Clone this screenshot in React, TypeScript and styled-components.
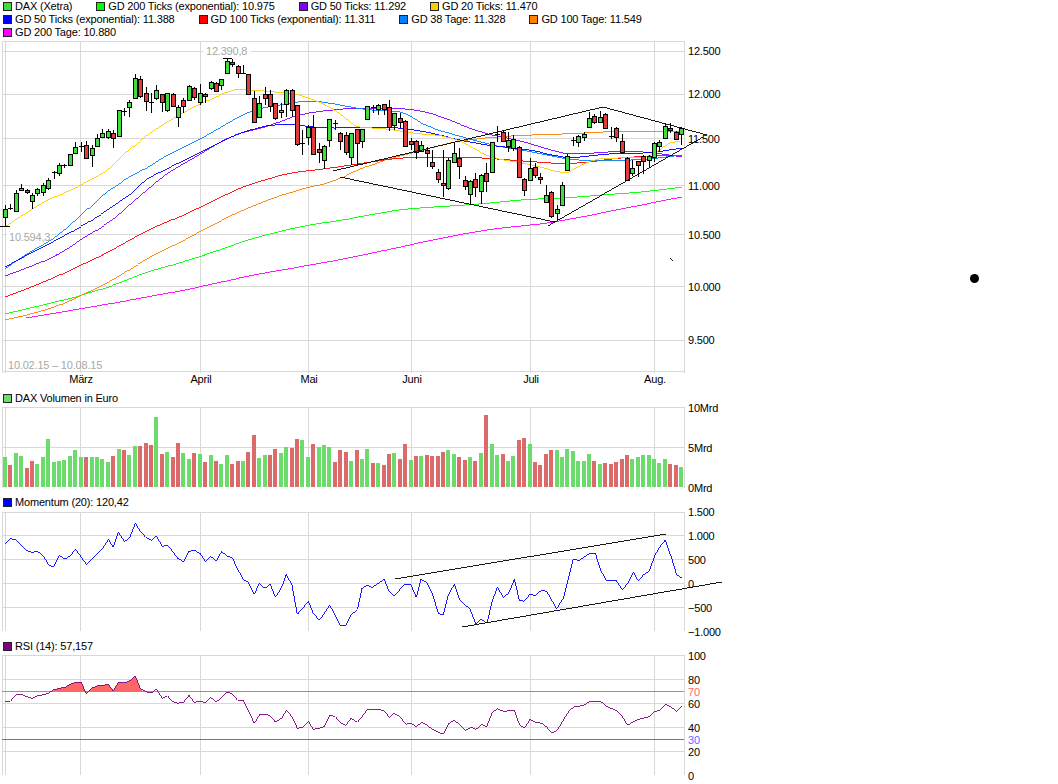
import React, { FC, ReactElement } from 'react'
import styled, { createGlobalStyle } from 'styled-components'

const GlobalStyle = createGlobalStyle`
  html, body {
    margin: 0;
    padding: 0;
    background: #fff;
    font-family: "Liberation Sans", Arial, sans-serif;
  }
`

const Page = styled.div`
  position: relative;
  width: 1058px;
  height: 784px;
  overflow: hidden;
  color: #000;
  font-size: 11px;
  letter-spacing: -0.18px;
`

const Legend = styled.div`
  display: flex;
  flex-wrap: wrap;
  align-content: flex-start;
  column-gap: 24px;
  width: 690px;
  height: 41px;
  padding-left: 3px;
  box-sizing: border-box;
`

const LegendItem = styled.div`
  display: flex;
  align-items: center;
  gap: 3px;
  height: 13px;
  line-height: 13px;
  white-space: nowrap;
`

const Swatch = styled.span<{ $color: string }>`
  width: 7px;
  height: 7px;
  border: 1px solid #222;
  background: ${props => props.$color};
`

const PanelTitle = styled.div`
  display: flex;
  align-items: flex-start;
  height: 16px;
  padding: 1px 0 0 3px;
  box-sizing: border-box;
`

const ChartSvg = styled.svg`
  display: block;
  width: 730px;
  overflow: visible;
`

const Label = styled.text<{ $color?: string }>`
  font-family: "Liberation Sans", Arial, sans-serif;
  font-size: 11px;
  letter-spacing: -0.2px;
  fill: ${props => props.$color || '#000'};
`

const Marker = styled.div`
  position: absolute;
  left: 970px;
  top: 274px;
  width: 9px;
  height: 9px;
  border-radius: 50%;
  background: #000;
`

const GRID = '#d8d8d8'
const GRAY = '#a8a8a8'
const LEFT = 2
const RIGHT = 684
const THIN = 0.9
const MONTHS: [string, number][] = [
    ['März', 80],
    ['April', 200],
    ['Mai', 308],
    ['Juni', 411],
    ['Juli', 530],
    ['Aug.', 654],
]

const slotX = (i: number): number => Math.round(5 + i * 5.408)

// top, bottom, high, low of each candle in page pixels
type Candle = [number, number, number, number, 'g' | 'r']

const CANDLES: Candle[] = [
    [209, 217, 205, 226, 'g'], [208, 208, 204, 210, 'r'], [193, 211, 190, 211, 'g'], [188, 190, 184, 190, 'g'],
    [190, 192, 189, 194, 'r'], [195, 201, 193, 209, 'g'], [189, 193, 188, 196, 'g'], [185, 192, 183, 196, 'g'],
    [180, 188, 178, 190, 'g'], [172, 172, 171, 179, 'r'], [165, 173, 163, 176, 'g'], [165, 165, 164, 168, 'g'],
    [154, 165, 154, 166, 'g'], [147, 153, 142, 154, 'g'], [146, 146, 142, 152, 'g'], [145, 158, 141, 158, 'r'],
    [148, 155, 145, 167, 'g'], [138, 146, 134, 146, 'g'], [133, 137, 129, 138, 'g'], [131, 137, 129, 139, 'g'],
    [133, 138, 130, 148, 'r'], [110, 136, 110, 136, 'g'], [111, 111, 108, 116, 'g'], [102, 107, 100, 117, 'g'],
    [78, 98, 74, 98, 'g'], [79, 96, 76, 98, 'r'], [93, 101, 87, 111, 'r'], [102, 102, 93, 113, 'g'],
    [90, 98, 85, 100, 'g'], [94, 102, 94, 112, 'r'], [93, 110, 93, 112, 'g'], [94, 106, 93, 107, 'r'],
    [107, 117, 105, 127, 'g'], [100, 106, 98, 113, 'r'], [86, 100, 85, 101, 'g'], [88, 97, 87, 100, 'r'],
    [93, 102, 84, 105, 'g'], [94, 96, 93, 103, 'r'], [82, 88, 81, 90, 'g'], [83, 91, 82, 92, 'r'],
    [79, 85, 79, 90, 'g'], [61, 73, 59, 73, 'g'], [62, 64, 59, 67, 'r'], [66, 73, 65, 78, 'r'],
    [73, 73, 65, 74, 'r'], [74, 94, 74, 94, 'r'], [98, 122, 91, 123, 'r'], [103, 117, 96, 118, 'g'],
    [94, 98, 87, 105, 'r'], [94, 106, 90, 112, 'r'], [103, 118, 103, 120, 'r'], [110, 112, 103, 118, 'g'],
    [90, 104, 89, 117, 'g'], [90, 110, 89, 117, 'r'], [105, 144, 105, 146, 'r'], [143, 143, 130, 155, 'g'],
    [127, 137, 125, 145, 'g'], [127, 154, 115, 154, 'r'], [149, 152, 143, 163, 'r'], [146, 160, 145, 169, 'g'],
    [119, 140, 119, 147, 'g'], [123, 123, 120, 130, 'g'], [133, 141, 132, 150, 'r'], [135, 152, 132, 155, 'r'],
    [133, 157, 133, 165, 'g'], [129, 143, 129, 165, 'r'], [129, 141, 129, 148, 'g'], [106, 119, 106, 119, 'g'],
    [107, 107, 105, 113, 'g'], [105, 109, 104, 115, 'g'], [104, 109, 104, 115, 'r'], [107, 127, 100, 131, 'r'],
    [113, 125, 113, 130, 'g'], [118, 122, 113, 128, 'r'], [121, 146, 120, 147, 'r'], [141, 144, 138, 150, 'r'],
    [141, 152, 140, 159, 'r'], [145, 151, 141, 152, 'g'], [150, 153, 147, 167, 'r'], [162, 166, 150, 169, 'r'],
    [172, 179, 169, 183, 'r'], [183, 185, 150, 197, 'r'], [160, 188, 158, 190, 'g'], [153, 162, 143, 163, 'g'],
    [158, 166, 148, 179, 'r'], [180, 186, 176, 190, 'r'], [181, 194, 180, 205, 'g'], [179, 187, 173, 197, 'r'],
    [175, 191, 174, 204, 'g'], [173, 181, 163, 192, 'r'], [142, 172, 142, 172, 'g'], [134, 134, 126, 142, 'g'],
    [132, 141, 130, 141, 'r'], [140, 146, 132, 152, 'g'], [139, 148, 135, 151, 'g'], [147, 177, 146, 178, 'r'],
    [179, 190, 178, 196, 'r'], [168, 180, 158, 180, 'g'], [167, 175, 163, 178, 'r'], [177, 179, 173, 184, 'r'],
    [195, 202, 185, 202, 'g'], [192, 216, 191, 218, 'r'], [209, 213, 205, 220, 'g'], [185, 205, 182, 206, 'g'],
    [156, 170, 154, 171, 'g'], [140, 140, 137, 146, 'g'], [136, 142, 135, 147, 'g'], [134, 137, 132, 141, 'g'],
    [118, 127, 112, 128, 'g'], [116, 122, 114, 124, 'r'], [117, 122, 111, 122, 'g'], [114, 128, 113, 129, 'r'],
    [136, 136, 127, 139, 'g'], [128, 137, 127, 142, 'r'], [141, 152, 134, 154, 'r'], [158, 180, 157, 181, 'r'],
    [168, 173, 160, 176, 'g'], [161, 165, 161, 177, 'r'], [156, 161, 155, 174, 'r'], [156, 160, 155, 168, 'g'],
    [143, 157, 142, 162, 'g'], [142, 146, 140, 152, 'g'], [126, 138, 123, 138, 'g'], [128, 130, 123, 133, 'r'],
    [132, 139, 131, 140, 'r'], [128, 134, 127, 145, 'g'],
]

// bar tops on a 3x crop, baseline sits at 351 there
const VOLUME_TOPS = [
    261, 285, 249, 258, 294, 273, 282, 261, 207, 276, 273, 270, 258, 240, 261, 261, 261, 261, 267, 276, 258,
    237, 240, 255, 228, 228, 219, 225, 141, 252, 246, 261, 219, 249, 267, 249, 252, 276, 255, 273, 282, 255,
    282, 273, 273, 246, 195, 264, 255, 255, 237, 249, 231, 234, 207, 210, 261, 222, 231, 225, 231, 276, 240,
    246, 273, 240, 267, 237, 279, 279, 285, 252, 249, 267, 222, 270, 258, 258, 255, 258, 258, 246, 240, 252,
    261, 270, 261, 273, 249, 135, 222, 255, 252, 273, 258, 210, 204, 222, 276, 285, 252, 240, 240, 261, 237,
    243, 273, 273, 252, 273, 282, 279, 282, 276, 267, 255, 267, 261, 255, 255, 267, 279, 267, 282, 285, 291,
]

// bar numbers counted from 1
const VOLUME_RED = new Set([
    2, 5, 6, 16, 21, 23, 26, 27, 28, 30, 32, 33, 36, 38, 40, 43, 44, 46, 47, 50, 51, 54, 55, 58, 62, 63, 64, 66,
    69, 71, 72, 74, 75, 77, 79, 80, 81, 82, 85, 86, 88, 90, 93, 96, 97, 99, 100, 101, 102, 110, 112, 113, 114,
    115, 116, 124, 125,
])

type Point = [number, number]

const toPoints = (points: Point[]): string => points.map(([x, y]) => `${x},${y}`).join(' ')

// rounds the corners of a traced average through the midpoints
const toCurve = (points: Point[]): string => {
    let d = `M${points[0][0]} ${points[0][1]}`
    for (let i = 1; i < points.length - 1; i++) {
        const [x, y] = points[i]
        const [nx, ny] = points[i + 1]
        d += ` Q${x} ${y} ${(x + nx) / 2} ${(y + ny) / 2}`
    }
    const [lx, ly] = points[points.length - 1]
    return `${d} L${lx} ${ly}`
}

// traced from 3x crops, so put back on the page
const fromCrop = (points: Point[], originX: number, originY: number): Point[] =>
    points.map(([x, y]) => [originX + x / 3, originY + y / 3])

const AVERAGES: { color: string; points: Point[] }[] = [
    { // GD 200 Tage
        color: '#ff00ff',
        points: [[26, 318], [80, 309], [147, 297], [200, 287], [247, 276], [310, 265], [350, 258], [417, 243], [483, 230], [530, 225], [550, 223], [617, 210], [650, 203], [682, 197]],
    },
    { // GD 200 Ticks
        color: '#00ff00',
        points: [[5, 314], [43, 305], [80, 296], [123, 282], [143, 273], [200, 257], [237, 243], [273, 233], [307, 225], [350, 219], [393, 210], [433, 207], [483, 204], [527, 199], [567, 198], [600, 195], [643, 192], [682, 187]],
    },
    { // GD 100 Tage
        color: '#ff7f00',
        points: [[5, 320], [43, 312], [80, 296], [110, 282], [147, 258], [200, 232], [227, 217], [267, 200], [300, 189], [333, 182], [350, 173], [383, 160], [417, 152], [450, 142], [483, 138], [523, 135], [567, 134], [600, 132], [633, 131], [682, 132]],
    },
    { // GD 100 Ticks
        color: '#ff0000',
        points: [[5, 297], [43, 283], [80, 265], [113, 250], [147, 230], [200, 208], [240, 187], [287, 173], [317, 170], [350, 165], [383, 160], [410, 157], [467, 157], [497, 159], [523, 161], [550, 163], [570, 164], [597, 161], [627, 157], [682, 155]],
    },
    { // GD 50 Ticks
        color: '#8000ff',
        points: [[5, 276], [30, 267], [57, 255], [80, 240], [113, 220], [127, 207], [147, 190], [167, 173], [187, 162], [207, 150], [227, 138], [243, 132], [267, 127], [290, 117], [313, 112], [350, 108], [403, 108], [433, 113], [460, 125], [490, 135], [517, 140], [540, 147], [563, 154], [583, 154], [617, 151], [650, 152], [682, 157]],
    },
    { // GD 38 Tage
        color: '#0080ff',
        points: [[5, 269], [27, 253], [53, 240], [77, 219], [100, 197], [123, 180], [143, 170], [167, 155], [193, 143], [213, 132], [233, 120], [253, 110], [267, 107], [290, 103], [313, 100], [350, 107], [367, 110], [393, 111], [407, 113], [423, 125], [443, 132], [467, 138], [490, 145], [510, 148], [537, 153], [560, 158], [577, 160], [597, 161], [633, 160], [650, 159], [682, 155]],
    },
    { // GD 50 Ticks (exponential)
        color: '#0000ff',
        points: [[5, 267], [27, 255], [53, 242], [92, 220], [103, 213], [127, 197], [147, 178], [170, 167], [200, 153], [220, 142], [240, 133], [267, 125], [293, 124], [317, 128], [350, 128], [383, 127], [400, 128], [427, 132], [450, 138], [483, 145], [517, 148], [540, 152], [563, 158], [583, 157], [603, 154], [633, 153], [650, 153], [682, 148]],
    },
    { // GD 20 Ticks
        color: '#ffcc00',
        points: [[5, 227], [43, 201], [70, 191], [83, 183], [107, 172], [120, 157], [147, 135], [167, 122], [197, 105], [220, 95], [233, 89], [253, 90], [287, 93], [300, 95], [320, 102], [337, 112], [350, 123], [360, 128], [383, 128], [417, 134], [440, 135], [457, 140], [465, 143], [480, 153], [497, 159], [517, 162], [537, 166], [550, 170], [563, 173], [570, 172], [583, 163], [600, 158], [633, 158], [648, 157], [660, 150], [667, 143], [680, 141]],
    },
]

const PRICE_TRENDS: [Point, Point][] = [
    [[333, 171], [603, 107]],
    [[603, 107], [707, 135]],
    [[340, 177], [555, 222]],
    [[548, 226], [703, 137]],
    [[670, 258], [673, 261]],
]

const MOMENTUM_TRENDS: [Point, Point][] = [
    [[395, 579], [666, 534]],
    [[462, 627], [722, 582]],
]

const MOMENTUM: Point[] = [
    ...fromCrop([[15, 133], [31, 115], [47, 120], [63, 135], [80, 152], [97, 157], [112, 154], [130, 167], [145, 193], [160, 202], [178, 167], [195, 177], [211, 167], [226, 148], [243, 170], [259, 193], [275, 178], [292, 162], [308, 146], [325, 118], [340, 142], [355, 97], [373, 124], [388, 115], [406, 70], [421, 94], [437, 112], [454, 121], [469, 109], [487, 139], [502, 135], [518, 154], [534, 176], [551, 185], [567, 154], [583, 151], [600, 160], [616, 184], [632, 169], [649, 184], [665, 154], [681, 169], [697, 173], [713, 208], [730, 238], [745, 247], [763, 283], [778, 250], [795, 265], [811, 253], [826, 292], [845, 262], [859, 223], [876, 256], [892, 343], [908, 325], [925, 304], [940, 340], [958, 361], [973, 340], [989, 316], [1006, 346], [1021, 376], [1037, 376], [1053, 346], [1072, 328]], 0, 500),
    ...fromCrop([[0, 295], [6, 265], [20, 256], [37, 262], [55, 250], [73, 238], [85, 270], [103, 288], [120, 268], [135, 253], [152, 253], [169, 292], [183, 238], [200, 248], [217, 280], [235, 340], [250, 345], [265, 285], [283, 253], [298, 298], [313, 312], [330, 328], [348, 373], [363, 358], [381, 370], [396, 305], [412, 262], [430, 292], [446, 280], [463, 238], [478, 300], [492, 304], [510, 283], [526, 287], [545, 270], [560, 274], [590, 326], [610, 295], [640, 177], [657, 182], [690, 160], [706, 160], [722, 210], [738, 240], [770, 243], [787, 270], [803, 250], [820, 217], [835, 243], [850, 225], [868, 213], [885, 165], [900, 140], [916, 120], [935, 175], [950, 225], [965, 233]], 360, 500),
]

const RSI_LEFT: Point[] = [[15, 605], [31, 604], [47, 585], [63, 582], [80, 590], [97, 595], [112, 588], [130, 584], [145, 580], [160, 570], [178, 565], [195, 562], [211, 553], [226, 547], [243, 547], [259, 580], [275, 565], [292, 558], [308, 556], [325, 553], [340, 573], [355, 547], [373, 549], [388, 543], [406, 529], [421, 565], [437, 575], [454, 579], [469, 568], [487, 595], [502, 587], [518, 605], [534, 610], [551, 606], [567, 586], [583, 607], [600, 604], [616, 608], [632, 592], [649, 606], [665, 592], [681, 576], [697, 582], [713, 601], [730, 601], [745, 632], [763, 670], [778, 645], [795, 642], [811, 648], [826, 666], [845, 655], [859, 631], [876, 650], [892, 685], [908, 682], [925, 664], [940, 688], [958, 685], [973, 680], [989, 646], [1006, 650], [1021, 668], [1037, 676], [1053, 655], [1072, 667]]

const RSI: Point[] = [
    ...fromCrop(RSI_LEFT, 0, 500),
    ...fromCrop([[0, 658], [6, 650], [22, 628], [55, 628], [73, 633], [88, 652], [103, 640], [120, 650], [137, 673], [152, 670], [169, 680], [185, 667], [200, 675], [217, 688], [235, 696], [250, 703], [267, 670], [283, 661], [300, 675], [317, 691], [333, 682], [348, 688], [365, 673], [380, 680], [397, 638], [412, 626], [430, 634], [463, 631], [478, 673], [493, 685], [510, 658], [526, 666], [545, 670], [560, 681], [575, 700], [592, 690], [610, 660], [630, 630], [645, 620], [670, 617], [690, 604], [722, 604], [740, 620], [770, 632], [787, 650], [803, 676], [820, 665], [835, 658], [868, 650], [885, 634], [900, 631], [916, 613], [935, 622], [950, 634], [965, 618]], 360, 500),
]

const RSI_OVERBOUGHT: Point[] = fromCrop([[155, 575], ...RSI_LEFT.slice(9, 26), [430, 575]], 0, 500)

const LEGEND: [string, string][] = [
    ['#40dc40', 'DAX (Xetra)'],
    ['#00ff00', 'GD 200 Ticks (exponential): 10.975'],
    ['#8000ff', 'GD 50 Ticks: 11.292'],
    ['#ffcc00', 'GD 20 Ticks: 11.470'],
    ['#0000ff', 'GD 50 Ticks (exponential): 11.388'],
    ['#ff0000', 'GD 100 Ticks (exponential): 11.311'],
    ['#0080ff', 'GD 38 Tage: 11.328'],
    ['#ff7f00', 'GD 100 Tage: 11.549'],
    ['#ff00ff', 'GD 200 Tage: 10.880'],
]

type FrameProps = {
    top: number
    bottom: number
    rows: number[]
    bottomLine?: boolean
}

const Frame: FC<FrameProps> = ({ top, bottom, rows, bottomLine }): ReactElement => (
    <g stroke={GRID} shapeRendering="crispEdges">
        <line x1={LEFT + 0.5} y1={top} x2={LEFT + 0.5} y2={bottom} />
        <line x1={5.5} y1={top} x2={5.5} y2={bottom} />
        {MONTHS.map(([name, x]) => (
            <line key={name} x1={x + 0.5} y1={top} x2={x + 0.5} y2={bottom} />
        ))}
        <line x1={LEFT} y1={top + 0.5} x2={RIGHT + 1} y2={top + 0.5} />
        {rows.map(y => (
            <line key={y} x1={LEFT} y1={y + 0.5} x2={RIGHT} y2={y + 0.5} />
        ))}
        {bottomLine && <line x1={LEFT} y1={bottom - 1.5} x2={RIGHT} y2={bottom - 1.5} />}
        <line x1={RIGHT + 0.5} y1={top} x2={RIGHT + 0.5} y2={bottom} />
    </g>
)

const AxisLabels: FC<{ labels: [string, number, string?][] }> = ({ labels }): ReactElement => (
    <>
        {labels.map(([text, y, color]) => (
            <Label key={text} x={688} y={y + 4} $color={color}>{text}</Label>
        ))}
    </>
)

const CandleMark: FC<{ candle: Candle; index: number }> = ({ candle, index }): ReactElement => {
    const [top, bottom, high, low, kind] = candle
    const x = slotX(index)
    return (
        <g shapeRendering="crispEdges">
            <line x1={x + 0.5} y1={high} x2={x + 0.5} y2={low} stroke="#000" />
            {top === bottom ? (
                <line x1={x - 2} y1={top + 0.5} x2={x + 3} y2={top + 0.5} stroke="#000" />
            ) : (
                <rect
                    x={x - 1.5}
                    y={top + 0.5}
                    width={4}
                    height={bottom - top}
                    fill={kind === 'g' ? '#40dc40' : '#e03c3c'}
                    stroke="#000"
                />
            )}
        </g>
    )
}

const Trend: FC<{ line: [Point, Point] }> = ({ line }): ReactElement => (
    <line
        x1={line[0][0]}
        y1={line[0][1]}
        x2={line[1][0]}
        y2={line[1][1]}
        stroke="#000"
        strokeWidth={THIN}
        shapeRendering="crispEdges"
    />
)

const PriceChart: FC = (): ReactElement => (
    <ChartSvg viewBox="0 41 730 350" height={350}>
        <Frame top={41} bottom={373} rows={[51, 94, 138, 185, 234, 286, 340]} bottomLine />
        <rect x={203} y={45} width={48} height={13} fill="#fff" />
        <rect x={7} y={230} width={45} height={14} fill="#fff" />
        {AVERAGES.map(({ color, points }) => (
            <path key={color} d={toCurve(points)} fill="none" stroke={color} strokeWidth={THIN} shapeRendering="crispEdges" />
        ))}
        {CANDLES.map((candle, i) => (
            <CandleMark key={i} candle={candle} index={i} />
        ))}
        <g stroke="#000" shapeRendering="crispEdges">
            <line x1={223} y1={58.5} x2={232} y2={58.5} />
            <line x1={0} y1={226.5} x2={10} y2={226.5} />
        </g>
        {PRICE_TRENDS.map((line, i) => (
            <Trend key={i} line={line} />
        ))}
        <Label x={206} y={55} $color={GRAY}>12.390,8</Label>
        <Label x={9} y={241} $color={GRAY}>10.594,3</Label>
        <Label x={8} y={369} $color={GRAY}>10.02.15 – 10.08.15</Label>
        {MONTHS.map(([name, x]) => (
            <Label key={name} x={x + 1} y={383} textAnchor="middle">{name}</Label>
        ))}
        <AxisLabels
            labels={[
                ['12.500', 51],
                ['12.000', 94],
                ['11.500', 139],
                ['11.000', 186],
                ['10.500', 235],
                ['10.000', 287],
                ['9.500', 340],
            ]}
        />
    </ChartSvg>
)

const VolumeChart: FC = (): ReactElement => (
    <ChartSvg viewBox="0 407 730 88" height={88}>
        <Frame top={407} bottom={488} rows={[447]} />
        {VOLUME_TOPS.map((top, i) => {
            const barTop = Math.round(370 + top / 3)
            return (
                <rect
                    key={i}
                    x={slotX(i) - 2}
                    y={barTop}
                    width={4}
                    height={487 - barTop}
                    fill={VOLUME_RED.has(i + 1) ? '#db6b6b' : '#6bdb6b'}
                    shapeRendering="crispEdges"
                />
            )
        })}
        <AxisLabels labels={[['10Mrd', 408], ['5Mrd', 448], ['0Mrd', 488]]} />
    </ChartSvg>
)

const MomentumChart: FC = (): ReactElement => (
    <ChartSvg viewBox="0 511 730 128" height={128}>
        <Frame top={512} bottom={631} rows={[535, 559, 583, 607]} />
        <polyline points={toPoints(MOMENTUM)} fill="none" stroke="#0000ff" strokeWidth={THIN} shapeRendering="crispEdges" />
        {MOMENTUM_TRENDS.map((line, i) => (
            <Trend key={i} line={line} />
        ))}
        <AxisLabels
            labels={[
                ['1.500', 512],
                ['1.000', 536],
                ['500', 560],
                ['0', 584],
                ['−500', 608],
                ['−1.000', 632],
            ]}
        />
    </ChartSvg>
)

const RsiChart: FC = (): ReactElement => (
    <ChartSvg viewBox="0 655 730 129" height={129}>
        <Frame top={655} bottom={775} rows={[679, 703, 727, 751]} />
        <polygon points={toPoints(RSI_OVERBOUGHT)} fill="#ff6666" />
        <g shapeRendering="crispEdges">
            <line x1={LEFT} y1={691.5} x2={RIGHT} y2={691.5} stroke="#ff6666" />
            <line x1={LEFT} y1={739.5} x2={RIGHT} y2={739.5} stroke="#6666ff" />
            <polyline points={toPoints(RSI)} fill="none" stroke="#800080" strokeWidth={THIN} />
        </g>
        <AxisLabels
            labels={[
                ['100', 656],
                ['80', 680],
                ['70', 692, '#ff6666'],
                ['60', 704],
                ['40', 728],
                ['30', 740, '#6666ff'],
                ['20', 752],
                ['0', 776],
            ]}
        />
    </ChartSvg>
)

const App: FC = (): ReactElement => {
    return (
        <Page>
            <GlobalStyle />
            <Legend>
                {LEGEND.map(([color, text]) => (
                    <LegendItem key={text}>
                        <Swatch $color={color} />
                        {text}
                    </LegendItem>
                ))}
            </Legend>
            <PriceChart />
            <PanelTitle>
                <LegendItem><Swatch $color="#6bdb6b" />DAX Volumen in Euro</LegendItem>
            </PanelTitle>
            <VolumeChart />
            <PanelTitle>
                <LegendItem><Swatch $color="#0000ff" />Momentum (20): 120,42</LegendItem>
            </PanelTitle>
            <MomentumChart />
            <PanelTitle>
                <LegendItem><Swatch $color="#800080" />RSI (14): 57,157</LegendItem>
            </PanelTitle>
            <RsiChart />
            <Marker />
        </Page>
    )
}

export default App
